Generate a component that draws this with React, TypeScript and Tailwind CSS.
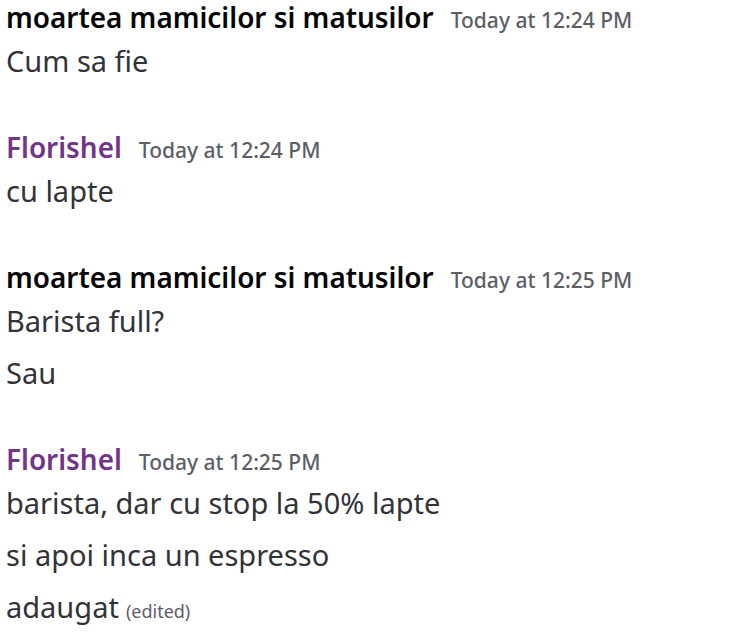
import React from "react";

type Msg = {
  author: string;
  color: string;
  time: string;
  lines: string[];
  edited?: boolean;
};

const messages: Msg[] = [
  { author: "moartea mamicilor si matusilor", color: "text-[#060607]", time: "Today at 12:24 PM", lines: ["Cum sa fie"] },
  { author: "Florishel", color: "text-[#71368a]", time: "Today at 12:24 PM", lines: ["cu lapte"] },
  { author: "moartea mamicilor si matusilor", color: "text-[#060607]", time: "Today at 12:25 PM", lines: ["Barista full?", "Sau"] },
  {
    author: "Florishel",
    color: "text-[#71368a]",
    time: "Today at 12:25 PM",
    lines: ["barista, dar cu stop la 50% lapte", "si apoi inca un espresso", "adaugat"],
    edited: true,
  },
];

export default function App() {
  return (
    <div className="w-[736px] h-[634px] bg-white overflow-hidden pl-[6px] font-['Noto_Sans',sans-serif]">
      <div className="flex flex-col gap-[43px]">
        {messages.map((m, i) => (
          <div key={i} className="flex flex-col">
            {/* header */}
            <div className="flex items-baseline gap-[17px] h-[35px] leading-[35px]">
              <span className={`text-[27.9px] font-semibold ${m.color}`}>{m.author}</span>
              <span className="text-[21px] font-medium text-[#5c5e66]">{m.time}</span>
            </div>
            {m.lines.map((line, j) => (
              <div key={j} className="h-[52px] leading-[52px] text-[29px] text-[#313338]">
                {line}
                {m.edited && j === m.lines.length - 1 && (
                  <span className="ml-[7px] text-[18px] text-[#5c5e66]">(edited)</span>
                )}
              </div>
            ))}
          </div>
        ))}
      </div>
    </div>
  );
}
